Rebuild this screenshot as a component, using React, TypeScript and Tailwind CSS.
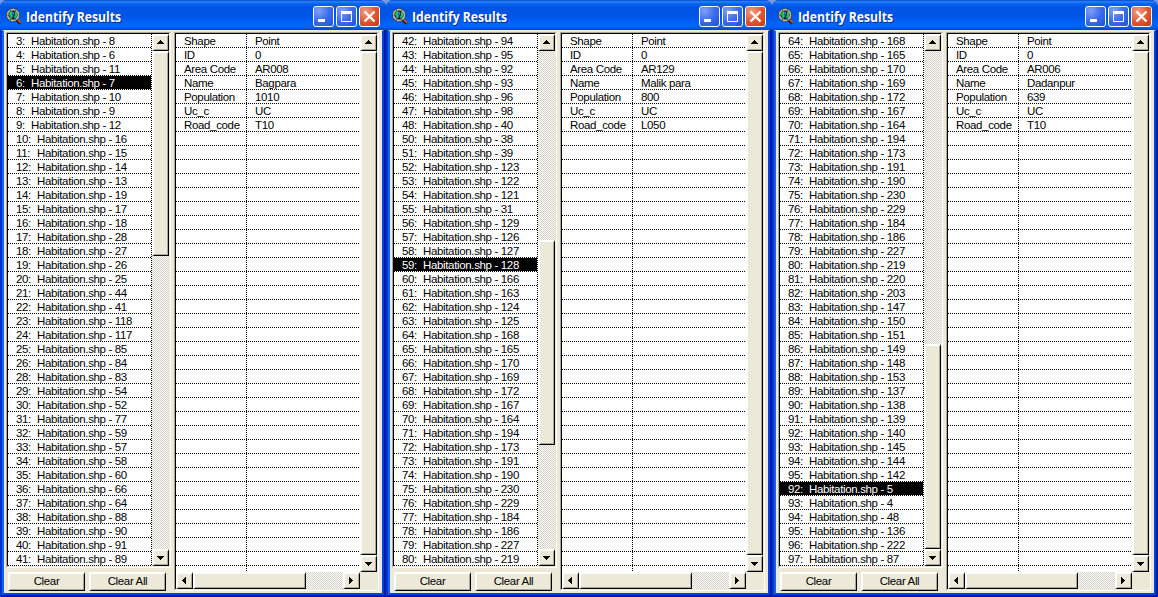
import React from "react";

type Row = [number, number];
type WindowData = {
  rows: Row[];
  selected: number;
  thumbTop: number;
  area: string;
  name: string;
  population: string;
  road: string;
};

const seq = (start: number, values: number[], skip?: number): Row[] => {
  let n = start - 1;
  return values.map((v) => {
    n += 1;
    if (n === skip) n += 1;
    return [n, v];
  });
};

const windows: WindowData[] = [
  {
    rows: seq(3, [8, 6, 11, 7, 10, 9, 12, 16, 15, 14, 13, 19, 17, 18, 28, 27, 26, 25, 44, 41, 118, 117, 85, 84, 83, 54, 52, 77, 59, 57, 58, 60, 66, 64, 88, 90, 91, 89], 27),
    selected: 3,
    thumbTop: 0,
    area: "AR008",
    name: "Bagpara",
    population: "1010",
    road: "T10",
  },
  {
    rows: seq(42, [94, 95, 92, 93, 96, 98, 40, 38, 39, 123, 122, 121, 31, 129, 126, 127, 128, 166, 163, 124, 125, 168, 165, 170, 169, 172, 167, 164, 194, 173, 191, 190, 230, 229, 184, 186, 227, 219], 49),
    selected: 16,
    thumbTop: 189,
    area: "AR129",
    name: "Malik para",
    population: "800",
    road: "L050",
  },
  {
    rows: [
      ...seq(64, [168, 165, 170, 169, 172, 167, 164, 194, 173, 191, 190, 230, 229, 184, 186, 227, 219, 220, 203, 147, 150, 151, 149, 148, 153, 137, 138, 139, 140, 145, 144, 142]),
      ...seq(92, [5, 4, 48, 136, 222, 87]),
    ],
    selected: 32,
    thumbTop: 293,
    area: "AR006",
    name: "Dadanpur",
    population: "639",
    road: "T10",
  },
];

const face = "bg-[#ece9d8] border-l-2 border-t-2 border-l-white border-t-white border-r border-b border-r-black border-b-black shadow-[inset_-1px_-1px_0_#aca899]";
const hatch = "bg-[repeating-conic-gradient(#ffffff_0_25%,#d4d0c8_0_50%)] bg-[length:2px_2px]";
const dotsX = "bg-[repeating-linear-gradient(90deg,#000_0_1px,#fff_1px_2px)]";
const dotsY = "bg-[repeating-linear-gradient(180deg,#000_0_1px,#fff_1px_2px)]";

type Direction = "up" | "down" | "left" | "right";

function Arrow({ dir }: { dir: Direction }) {
  const d = {
    up: "M3 0h1v1h1v1h1v1h1v1H0V3h1V2h1V1h1z",
    down: "M0 0h7v1H6v1H5v1H4v1H3V3H2V2H1V1H0z",
    left: "M0 3h1V2h1V1h1V0h1v7H3V6H2V5H1V4H0z",
    right: "M0 0h1v1h1v1h1v1h1v1H3v1H2v1H1v1H0z",
  }[dir];
  const horizontal = dir === "left" || dir === "right";
  return (
    <svg width={horizontal ? 4 : 7} height={horizontal ? 7 : 4} shapeRendering="crispEdges">
      <path d={d} />
    </svg>
  );
}

function ScrollButton({ dir }: { dir: Direction }) {
  const nudge = { up: "pr-px pb-[2px]", down: "pr-px", left: "pr-[2px] pb-px", right: "pr-[2px] pb-px" }[dir];
  return (
    <div className={`flex h-[17px] w-[17px] shrink-0 items-center justify-center ${nudge} ${face}`}>
      <Arrow dir={dir} />
    </div>
  );
}

function GlobeIcon() {
  return (
    <svg width="16" height="17" viewBox="0 0 16 17" className="shrink-0">
      <path d="M10.500 11.500l4.200 4.200" stroke="#3a1c10" strokeWidth="3.200" />
      <path d="M11 10.800l4 4" stroke="#d0643c" strokeWidth="1.500" />
      <circle cx="7" cy="7" r="5.500" fill="#12245c" stroke="#3c3c36" strokeWidth="2.600" />
      <circle cx="7" cy="7" r="5.500" fill="none" stroke="#c4c0a8" strokeWidth="1.500" strokeDasharray="5 0.700" />
      <path d="M3 6l2-3 2 1-1 2 1 2-2 3-1-2zM9 3l2 2v3l-2 3-1-2 1-2z" fill="#19d43c" />
      <path d="M6 4h2v3H7zM9 9h2v1H9zM4 7h1v2H4z" fill="#2f76ff" />
    </svg>
  );
}

function CaptionButton({ kind }: { kind: "min" | "max" | "close" }) {
  const tone =
    kind === "close"
      ? "bg-[radial-gradient(circle_at_30%_25%,#f0a088_0%,#e0532c_55%,#c63a10_100%)]"
      : "bg-[radial-gradient(circle_at_25%_20%,#7ea0f4_0%,#3c6cec_50%,#1f4fdc_100%)]";
  return (
    <div className={`h-[21px] w-[21px] rounded-[3px] border border-white ${tone}`}>
      <svg width="19" height="19" viewBox="0 0 19 19" fill="none" stroke="#fff" className="block">
        {kind === "min" && <path d="M4 13.500h7" strokeWidth="3" />}
        {kind === "max" && <path d="M4.500 4v10.500h10V4" strokeWidth="1" />}
        {kind === "max" && <path d="M4 5.500h11" strokeWidth="3" />}
        {kind === "close" && <path d="M4.500 4.500l10 10M14.500 4.500l-10 10" strokeWidth="2.300" />}
      </svg>
    </div>
  );
}

function IdentifyWindow({ data }: { data: WindowData }) {
  const details = [
    ["Shape", "Point"],
    ["ID", "0"],
    ["Area Code", data.area],
    ["Name", data.name],
    ["Population", data.population],
    ["Uc_c", "UC"],
    ["Road_code", data.road],
  ];
  const gridRows = Array.from({ length: 38 }, (_, i) => details[i] ?? ["", ""]);
  return (
    <section className="flex h-[597px] w-[386px] shrink-0 flex-col overflow-hidden rounded-t-[7px] bg-[#0046e0]">
      <header className="flex h-[30px] shrink-0 items-center bg-[linear-gradient(180deg,#0347c8_0%,#2a84fa_6%,#0a63ee_12%,#0054e3_25%,#0055e6_55%,#0064fc_80%,#0062f6_90%,#0046cc_100%)] pt-[3px] pr-[6px] pl-[6px]">
        <GlobeIcon />
        <span className="ml-1 origin-left scale-x-[0.87] whitespace-nowrap font-['Open_Sans',sans-serif] text-[14px] leading-[16px] font-bold tracking-normal text-white [text-shadow:1px_1px_0_#0a2a88]">
          Identify Results
        </span>
        <div className="ml-auto flex gap-[2px]">
          <CaptionButton kind="min" />
          <CaptionButton kind="max" />
          <CaptionButton kind="close" />
        </div>
      </header>
      <div className="flex flex-1 border-r-2 border-b-2 border-l-2 border-r-[#0019a8] border-b-[#0019a8] border-l-[#0035cc]">
        <div className="flex flex-1 border-t border-r-2 border-b-2 border-l-2 border-t-[#ece9d8] border-r-[#0040e4] border-b-[#0040e4] border-l-[#1660f4] bg-[#ece9d8] pt-px pl-[2px]">
          <div className="flex w-[165px] shrink-0 flex-col">
            <div className="flex h-[536px] border-t border-r border-b border-l border-t-[#aca899] border-r-white border-b-white border-l-[#aca899]">
              <div className="flex h-[533px] w-[162px] border-t border-l border-black">
                <div className="w-[143px] shrink-0 bg-white">
                  {data.rows.map(([n, v], i) => (
                    <div key={i} className={i === data.selected ? "bg-black text-white" : "bg-white text-black"}>
                      <div className="relative z-10 flex h-[13px] pl-2 leading-[14px] whitespace-pre">
                        <span className={n < 10 ? "w-[15px]" : "w-[21px]"}>{n}:</span>
                        <span>Habitation.shp - {v}</span>
                      </div>
                      <div className={`h-px ${dotsX}`} />
                    </div>
                  ))}
                </div>
                <div className={`w-px shrink-0 ${dotsY}`} />
                <div className={`flex w-[17px] shrink-0 flex-col ${hatch}`}>
                  <ScrollButton dir="up" />
                  <div className="flex-1">
                    <div className={`h-[205px] ${face}`} style={{ marginTop: data.thumbTop }} />
                  </div>
                  <ScrollButton dir="down" />
                </div>
              </div>
            </div>
            <div className="mt-[4px] ml-[2px] flex gap-1">
              <div className={`flex h-[19px] w-[77px] items-center justify-center pr-px ${face}`}>Clear</div>
              <div className={`flex h-[19px] w-[77px] items-center justify-center pr-px ${face}`}>Clear All</div>
            </div>
          </div>
          <div className="ml-[3px] h-[559px] w-[205px] shrink-0 border-t border-r border-b border-l border-t-[#aca899] border-r-white border-b-white border-l-[#aca899]">
            <div className="flex h-[556px] w-[202px] flex-col border-t border-l border-black">
              <div className="flex h-[538px]">
                <div className="w-[184px] shrink-0 bg-white">
                  {gridRows.map(([k, v], i) => (
                    <div key={i}>
                      <div className="relative z-10 flex h-[13px] leading-[14px]">
                        <span className="w-[70px] pl-2">{k}</span>
                        <div className={`w-px ${dotsY}`} />
                        <span className="pl-2">{v}</span>
                      </div>
                      <div className={`h-px ${dotsX}`} />
                    </div>
                  ))}
                  <div className="flex h-[6px] pl-[70px]">
                    <div className={`w-px ${dotsY}`} />
                  </div>
                </div>
                <div className="flex w-[17px] shrink-0 flex-col">
                  <ScrollButton dir="up" />
                  <div className={`flex-1 ${face}`} />
                  <ScrollButton dir="down" />
                </div>
              </div>
              <div className={`flex h-[17px] w-[184px] ${hatch}`}>
                <ScrollButton dir="left" />
                <div className={`h-[17px] w-[113px] ${face}`} />
                <div className="flex-1" />
                <ScrollButton dir="right" />
              </div>
            </div>
          </div>
        </div>
      </div>
    </section>
  );
}

export default function App() {
  return (
    <main className="flex h-[597px] w-[1158px] overflow-hidden bg-[#7b9be0] font-['Liberation_Sans',Arial,sans-serif] text-[11.5px] tracking-[-0.35px] text-black">
      {windows.map((w, i) => (
        <IdentifyWindow key={i} data={w} />
      ))}
    </main>
  );
}
